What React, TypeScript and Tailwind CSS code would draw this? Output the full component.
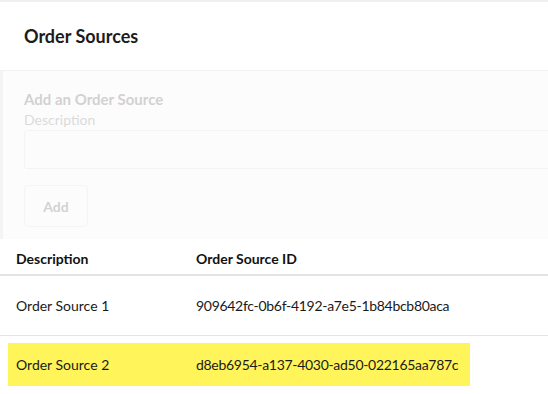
export default function App() {
  const rows = [
    { name: "Order Source 1", id: "909642fc-0b6f-4192-a7e5-1b84bcb80aca" },
    { name: "Order Source 2", id: "d8eb6954-a137-4030-ad50-022165aa787c" },
  ];

  return (
    <div className="flex h-[394px] w-[548px] flex-col overflow-hidden bg-[#efefef] pt-[2px] font-['Lato',sans-serif] text-[#222]">
      <div className="flex-1 bg-white">
        {/* Card header */}
        <div className="flex h-[69px] items-center border-b border-[#f1f1f1] px-6">
          <h1 className="text-[18px] font-bold text-[#1c1c1c]">Order Sources</h1>
        </div>

        {/* Add form (disabled look) */}
        <section className="h-[168px] border-l-[3px] border-[#f4f4f4] bg-[#fcfcfc] pl-[21px] pt-[19px]">
          <div className="opacity-25">
            <h2 className="text-[15px] font-bold leading-[18px] text-[#555]">Add an Order Source</h2>
            <label className="mt-[3px] block text-[14px] leading-[18px] text-[#777]">Description</label>
            <div className="mt-[1px] h-[39px] w-[560px] rounded-[3px] border border-[#ddd] bg-white" />
            <button className="mt-[16px] h-[42px] w-[64px] rounded-[4px] border border-[#ddd] bg-white text-[14px] font-bold text-[#555]">
              Add
            </button>
          </div>
        </section>

        {/* Table */}
        <div className="pt-[3px]">
          <div className="flex h-[34px] items-center border-b-2 border-[#e4e4e4] text-[14px] font-bold text-[#111]">
            <div className="w-[196px] pl-4">Description</div>
            <div>Order Source ID</div>
          </div>
          {rows.map((r, i) =>
            i === 0 ? (
              <div key={r.id} className="flex h-[60px] items-center border-b border-[#e4e4e4] text-[14px] text-[#1a1a1a]">
                <div className="w-[196px] pl-4">{r.name}</div>
                <div className="tracking-[-0.3px]">{r.id}</div>
              </div>
            ) : (
              <div key={r.id} className="pl-2 pt-[7px]">
                <div className="flex h-[43px] w-[462px] items-center bg-[#fff55a] text-[14px] text-[#1a1a1a]">
                  <div className="w-[188px] pl-2">{r.name}</div>
                  <div className="tracking-[-0.3px]">{r.id}</div>
                </div>
              </div>
            )
          )}
        </div>
      </div>
    </div>
  );
}
